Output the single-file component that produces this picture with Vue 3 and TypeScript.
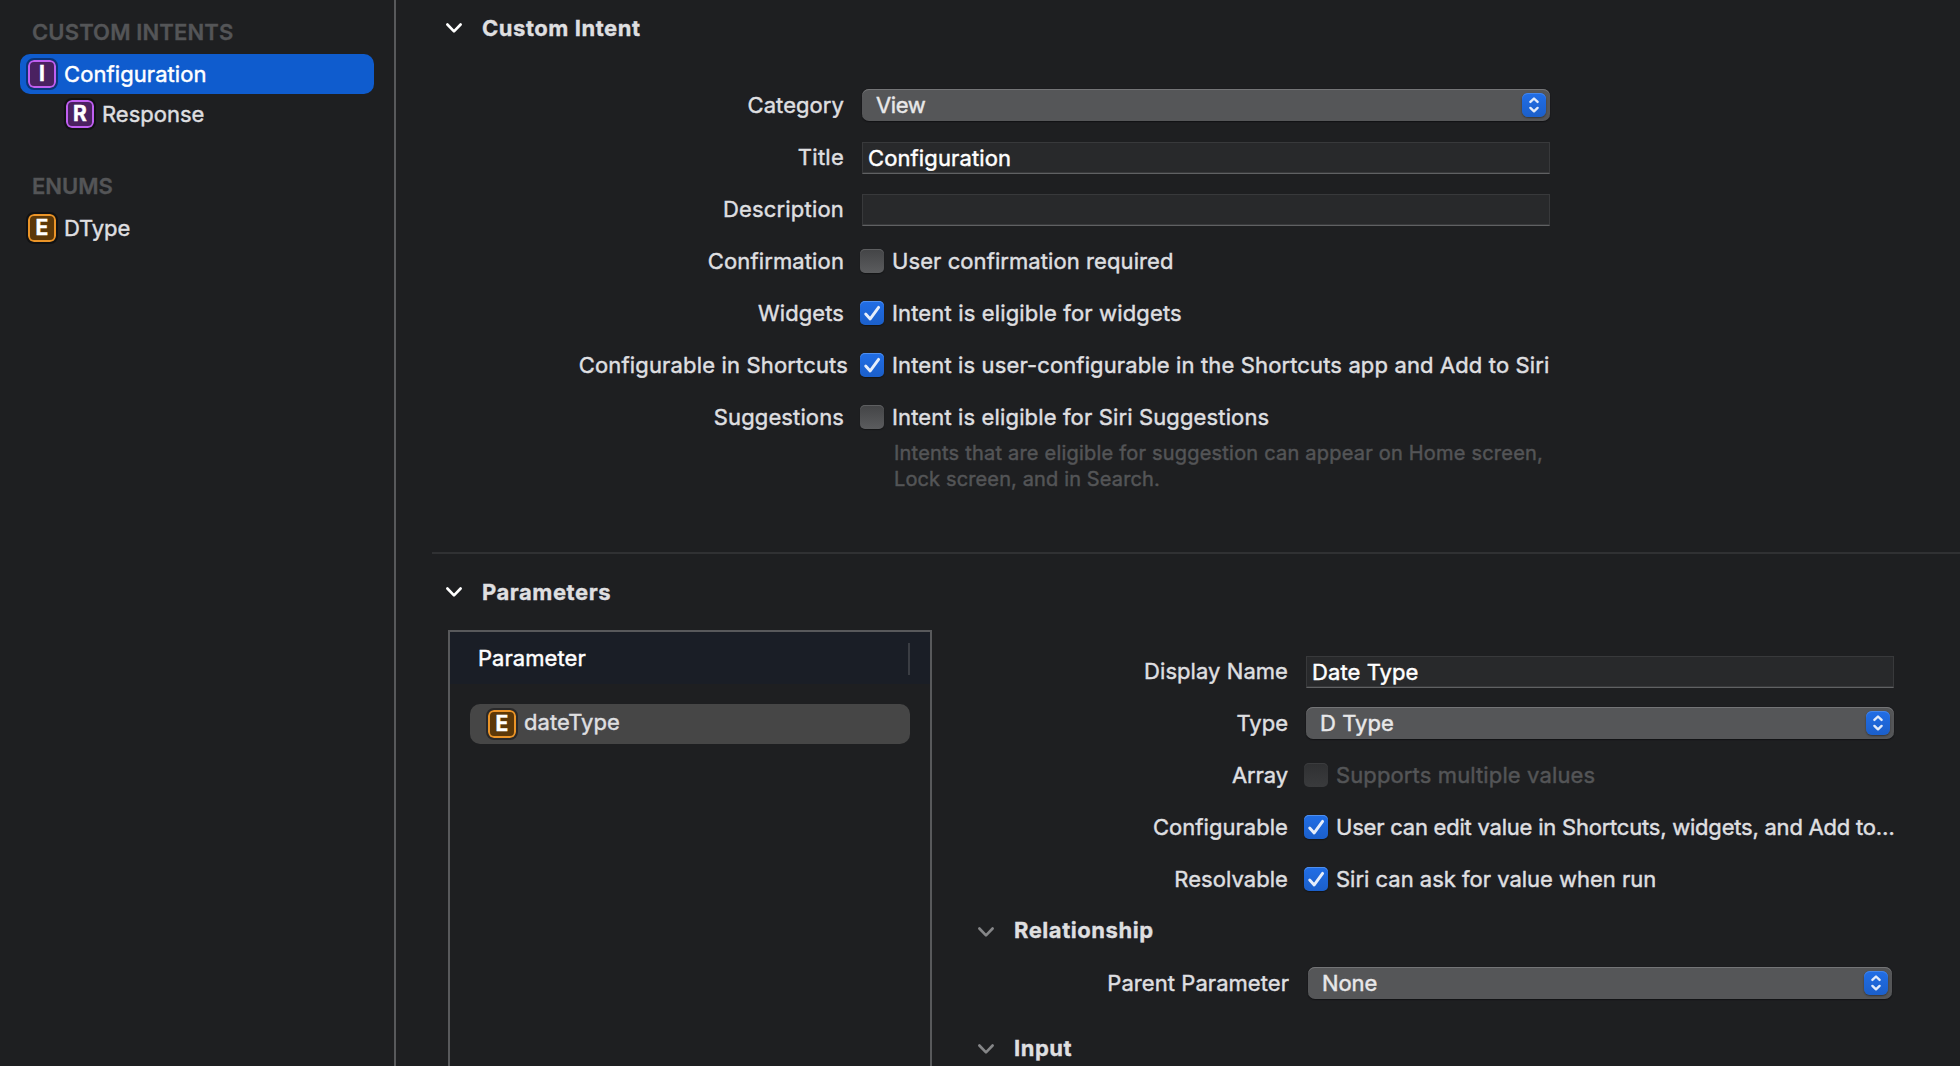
<script setup lang="ts">
interface FormRow {
  label: string
  labelTrack: number
  kind: 'select' | 'field' | 'check'
  text: string
  track: number
  checked?: boolean
  disabled?: boolean
  wide?: boolean
}

const intentRows: FormRow[] = [
  { label: 'Category', labelTrack: 0.065, kind: 'select', text: 'View', track: -0.4 },
  { label: 'Title', labelTrack: 0.25, kind: 'field', text: 'Configuration', track: 0.118 },
  { label: 'Description', labelTrack: 0.19, kind: 'field', text: '', track: 0 },
  { label: 'Confirmation', labelTrack: 0.12, kind: 'check', text: 'User confirmation required', track: 0.08 },
  { label: 'Widgets', labelTrack: 0.07, kind: 'check', text: 'Intent is eligible for widgets', track: 0.152, checked: true },
  { label: 'Configurable in Shortcuts', labelTrack: 0.159, kind: 'check', text: 'Intent is user-configurable in the Shortcuts app and Add to Siri', track: 0.133, checked: true, wide: true },
  { label: 'Suggestions', labelTrack: 0.12, kind: 'check', text: 'Intent is eligible for Siri Suggestions', track: 0.138 },
]

const parameterRows: FormRow[] = [
  { label: 'Display Name', labelTrack: 0.055, kind: 'field', text: 'Date Type', track: 0.089 },
  { label: 'Type', labelTrack: 0.013, kind: 'select', text: 'D Type', track: 0.055 },
  { label: 'Array', labelTrack: -0.1, kind: 'check', text: 'Supports multiple values', track: 0.12, disabled: true },
  { label: 'Configurable', labelTrack: 0.05, kind: 'check', text: 'User can edit value in Shortcuts, widgets, and Add to…', track: -0.22, checked: true },
  { label: 'Resolvable', labelTrack: 0.05, kind: 'check', text: 'Siri can ask for value when run', track: -0.009, checked: true },
]

const relationshipRows: FormRow[] = [
  { label: 'Parent Parameter', labelTrack: 0.055, kind: 'select', text: 'None', track: -0.088 },
]

const forms = { intent: intentRows, parameter: parameterRows, relationship: relationshipRows }
const track = (value: number) => ({ letterSpacing: `${value}px` })
</script>

<template>
  <div class="app">
    <aside class="sidebar">
      <h2 class="group custom">CUSTOM INTENTS</h2>
      <div class="item selected"><span class="badge purple on-blue">I</span><span class="name">Configuration</span></div>
      <div class="item child"><span class="badge purple">R</span><span class="name">Response</span></div>
      <h2 class="group enums">ENUMS</h2>
      <div class="item"><span class="badge orange">E</span><span class="name tight">DType</span></div>
    </aside>

    <main class="editor">
      <section class="intent">
        <header class="heading">
          <svg class="chevron" viewBox="0 0 16 10"><path d="M1.4 1.5 8 8.4l6.6-6.9" /></svg>
          <h3>Custom Intent</h3>
        </header>
        <div class="form">
          <div v-for="row in forms.intent" :key="row.label" class="row">
            <label :class="{ wide: row.wide }" :style="track(row.labelTrack)">{{ row.label }}</label>
            <div v-if="row.kind === 'select'" class="select">
              <span :style="track(row.track)">{{ row.text }}</span>
              <i class="stepper"><svg viewBox="0 0 24 24"><path d="M8.4 8.9 12 5.5l3.6 3.4M8.4 14.9 12 18.3l3.6-3.4" /></svg></i>
            </div>
            <div v-else-if="row.kind === 'field'" class="field" :style="track(row.track)">{{ row.text }}</div>
            <div v-else class="check">
              <i class="box" :class="{ checked: row.checked }"><svg v-if="row.checked" viewBox="0 0 24 24"><path d="M5.7 13 10.2 17.9 18.6 6.3" /></svg></i>
              <span :style="track(row.track)">{{ row.text }}</span>
            </div>
          </div>
        </div>
        <p class="hint">
          <span class="first">Intents that are eligible for suggestion can appear on Home screen,</span><br />
          <span class="second">Lock screen, and in Search.</span>
        </p>
      </section>

      <section class="parameters">
        <header class="heading">
          <svg class="chevron" viewBox="0 0 16 10"><path d="M1.4 1.5 8 8.4l6.6-6.9" /></svg>
          <h3>Parameters</h3>
        </header>
        <div class="columns">
          <div class="table">
            <div class="thead"><span>Parameter</span><i class="grip"></i></div>
            <div class="entry"><span class="badge orange on-gray">E</span><span class="name">dateType</span></div>
          </div>
          <div class="details">
            <div class="form">
              <div v-for="row in forms.parameter" :key="row.label" class="row">
                <label :style="track(row.labelTrack)">{{ row.label }}</label>
                <div v-if="row.kind === 'select'" class="select">
                  <span :style="track(row.track)">{{ row.text }}</span>
                  <i class="stepper"><svg viewBox="0 0 24 24"><path d="M8.4 8.9 12 5.5l3.6 3.4M8.4 14.9 12 18.3l3.6-3.4" /></svg></i>
                </div>
                <div v-else-if="row.kind === 'field'" class="field" :style="track(row.track)">{{ row.text }}</div>
                <div v-else class="check" :class="{ disabled: row.disabled }">
                  <i class="box" :class="{ checked: row.checked }"><svg v-if="row.checked" viewBox="0 0 24 24"><path d="M5.7 13 10.2 17.9 18.6 6.3" /></svg></i>
                  <span :style="track(row.track)">{{ row.text }}</span>
                </div>
              </div>
            </div>
            <header class="heading sub">
              <svg class="chevron" viewBox="0 0 16 10"><path d="M1.4 1.5 8 8.4l6.6-6.9" /></svg>
              <h3 class="raised">Relationship</h3>
            </header>
            <div class="form relationship">
              <div v-for="row in forms.relationship" :key="row.label" class="row">
                <label :style="track(row.labelTrack)">{{ row.label }}</label>
                <div class="select">
                  <span :style="track(row.track)">{{ row.text }}</span>
                  <i class="stepper"><svg viewBox="0 0 24 24"><path d="M8.4 8.9 12 5.5l3.6 3.4M8.4 14.9 12 18.3l3.6-3.4" /></svg></i>
                </div>
              </div>
            </div>
            <header class="heading sub input">
              <svg class="chevron" viewBox="0 0 16 10"><path d="M1.4 1.5 8 8.4l6.6-6.9" /></svg>
              <h3>Input</h3>
            </header>
          </div>
        </div>
      </section>
    </main>
  </div>
</template>

<style>
body {
  background: #1e1f21;
}
</style>

<style scoped>
.app {
  display: flex;
  box-sizing: border-box;
  width: 1960px;
  height: 1066px;
  overflow: hidden;
  background: #1e1f21;
  color: #dfdfe0;
  font: 400 22px/26px Inter, 'Liberation Sans', sans-serif;
  -webkit-text-stroke: 0.45px currentColor;
  white-space: nowrap;
}
.app * {
  box-sizing: border-box;
}
h2,
h3,
p {
  margin: 0;
}
svg {
  display: block;
  fill: none;
  stroke-linecap: round;
  stroke-linejoin: round;
}

/* Sidebar */
.sidebar {
  flex: none;
  width: 396px;
  padding: 19px 20px 0;
  border-right: 2px solid #58595b;
}
.group {
  height: 26px;
  padding-left: 12px;
  color: #545557;
  font-size: 22px;
  font-weight: 600;
  -webkit-text-stroke: 0.35px currentColor;
}
.custom {
  margin-bottom: 9px;
  letter-spacing: 0.14px;
}
.enums {
  margin: 39px 0 9px;
}
.item {
  display: flex;
  align-items: center;
  gap: 6px;
  width: 354px;
  height: 40px;
  padding-left: 6px;
  border-radius: 10px;
}
.item .name {
  letter-spacing: 0;
}
.item .tight {
  letter-spacing: -0.12px;
}
.item.selected {
  background: #0f5cce;
  color: #fff;
}
.item.selected .name {
  letter-spacing: 0.08px;
}
.child {
  padding-left: 44px;
}
.badge {
  flex: none;
  display: flex;
  align-items: center;
  justify-content: center;
  width: 32px;
  height: 32px;
  border: 2px solid #111214;
  border-radius: 8px;
  color: #fff;
  font-size: 21px;
  font-weight: 700;
  line-height: 24px;
}
.badge.purple {
  background: #4a2160;
  box-shadow: inset 0 0 0 2px #bf5ff0;
}
.badge.orange {
  background: #5c3808;
  box-shadow: inset 0 0 0 2px #ea9428;
}
.badge.on-blue {
  border-color: #0b3579;
}
.badge.on-gray {
  border-color: #29292a;
}

/* Section headings */
.editor {
  flex: 1;
  min-width: 0;
}
.heading {
  display: flex;
  align-items: center;
  gap: 20px;
  height: 56px;
  padding-left: 50px;
}
.heading h3 {
  font-size: 22px;
  font-weight: 700;
  letter-spacing: 0.54px;
  -webkit-text-stroke: 0.35px currentColor;
}
.heading .raised {
  margin-top: -2px;
}
.chevron {
  width: 16px;
  height: 10px;
  stroke: #fff;
  stroke-width: 2.6;
}
.sub .chevron {
  margin-top: 2px;
  stroke: #858688;
}

/* Form rows */
.row {
  display: grid;
  grid-template-columns: 448px 688px;
  column-gap: 18px;
  align-items: center;
  height: 52px;
}
.row label {
  text-align: right;
}
.row label.wide {
  margin-right: -4px;
}
.select {
  display: flex;
  align-items: center;
  justify-content: space-between;
  height: 32px;
  padding: 0 4px 0 14px;
  border-radius: 7px;
  background: #555658;
  box-shadow: inset 0 1px 0 #747577, 0 1px 1px #121315, 0 0 1px #121315;
  color: #e8e8e9;
}
.stepper {
  width: 24px;
  height: 24px;
  border-radius: 6px;
  background: linear-gradient(#216ee6, #1b5fca);
  box-shadow: inset 0 1px 0 #4385ea, 0 1px 2px rgba(0, 0, 0, 0.4);
}
.stepper svg {
  stroke: #e2ebfa;
  stroke-width: 2.4;
}
.field {
  height: 32px;
  margin-top: 2px;
  padding-left: 5px;
  border: 1px solid #38393b;
  border-bottom-color: #606163;
  box-shadow: inset 0 -1px 0 #38393b;
  background: #28292b;
  color: #fff;
  line-height: 30px;
}
.check {
  display: flex;
  align-items: center;
  gap: 8px;
  margin-left: -2px;
}
.box {
  flex: none;
  width: 24px;
  height: 24px;
  border-radius: 5px;
  background: linear-gradient(#434446, #5b5c5e);
  box-shadow: inset 0 1px 0 #5e5f61, 0 1px 1px #131416;
}
.box.checked {
  background: linear-gradient(#216ee6, #1b5fca);
  box-shadow: inset 0 1px 0 #4f8fee, 0 1px 1px #131416;
}
.box svg {
  stroke: #e6eefb;
  stroke-width: 2.9;
}
.disabled {
  color: #545557;
}
.disabled .box {
  background: linear-gradient(#2f3032, #3a3b3d);
  box-shadow: inset 0 1px 0 #3b3c3e;
}

/* Intent section */
.intent {
  height: 552px;
}
.intent .form {
  padding-top: 23px;
}
.hint {
  margin: -3px 0 0 498px;
  color: #545557;
  font-size: 20px;
  line-height: 26px;
}
.first {
  letter-spacing: 0.206px;
}
.second {
  letter-spacing: 0.131px;
}

/* Parameters section */
.parameters {
  margin-left: 36px;
  padding-top: 10px;
  border-top: 2px solid #303133;
}
.parameters > .heading {
  padding-left: 14px;
}
.columns {
  display: flex;
  height: 460px;
  margin: 10px 0 0 16px;
}
.table {
  flex: none;
  width: 484px;
  height: 500px;
  border: 2px solid #58595b;
}
.thead {
  display: flex;
  align-items: center;
  justify-content: space-between;
  height: 52px;
  padding: 0 20px 0 28px;
  background: #1a1e26;
  color: #fff;
  letter-spacing: 0.057px;
}
.grip {
  width: 2px;
  height: 32px;
  margin-top: 2px;
  background: #3a3d43;
}
.entry {
  display: flex;
  align-items: center;
  gap: 6px;
  width: 440px;
  height: 40px;
  margin: 20px 0 0 20px;
  padding-left: 16px;
  border-radius: 10px;
  background: #464646;
  letter-spacing: 0.06px;
}
.entry .name {
  margin-top: -4px;
}
.details {
  padding-top: 15px;
}
.details .row {
  grid-template-columns: 356px 588px;
}
.details .relationship {
  padding-top: 1px;
}
.details .relationship .row {
  grid-template-columns: 357px 584px;
  column-gap: 19px;
}
.details .heading {
  height: 51px;
  padding-left: 46px;
}
.details .heading.input {
  margin-top: 13px;
}
</style>
